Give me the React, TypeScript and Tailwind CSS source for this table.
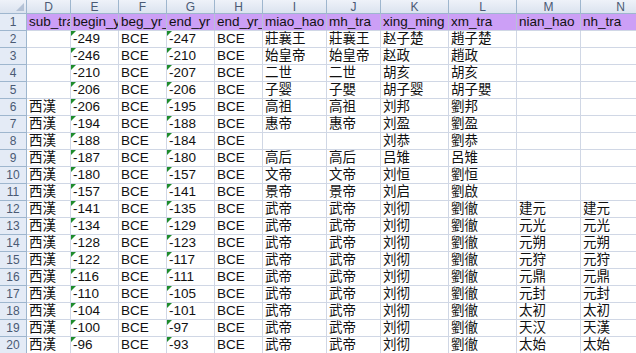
const cols = ['D', 'E', 'F', 'G', 'H', 'I', 'J', 'K', 'L', 'M', 'N'];
const widths = ['w-[44px]', 'w-[48px]', 'w-[48px]', 'w-[48px]', 'w-[48px]', 'w-[64px]', 'w-[54px]', 'w-[68px]', 'w-[68px]', 'w-[64px]', 'w-[80px]'];

const header = ['sub_tra', 'begin_yr', 'beg_yr_era', 'end_yr', 'end_yr_era', 'miao_hao', 'mh_tra', 'xing_ming', 'xm_tra', 'nian_hao', 'nh_tra'];

// D, begin, end, miao_hao, mh_tra, xing_ming, xm_tra, nian_hao, nh_tra
const rows: string[][] = [
  ['', '-249', '-247', '莊襄王', '莊襄王', '赵子楚', '趙子楚', '', ''],
  ['', '-246', '-210', '始皇帝', '始皇帝', '赵政', '趙政', '', ''],
  ['', '-210', '-207', '二世', '二世', '胡亥', '胡亥', '', ''],
  ['', '-206', '-206', '子婴', '子嬰', '胡子婴', '胡子嬰', '', ''],
  ['西漢', '-206', '-195', '高祖', '高祖', '刘邦', '劉邦', '', ''],
  ['西漢', '-194', '-188', '惠帝', '惠帝', '刘盈', '劉盈', '', ''],
  ['西漢', '-188', '-184', '', '', '刘恭', '劉恭', '', ''],
  ['西漢', '-187', '-180', '高后', '高后', '吕雉', '呂雉', '', ''],
  ['西漢', '-180', '-157', '文帝', '文帝', '刘恒', '劉恒', '', ''],
  ['西漢', '-157', '-141', '景帝', '景帝', '刘启', '劉啟', '', ''],
  ['西漢', '-141', '-135', '武帝', '武帝', '刘彻', '劉徹', '建元', '建元'],
  ['西漢', '-134', '-129', '武帝', '武帝', '刘彻', '劉徹', '元光', '元光'],
  ['西漢', '-128', '-123', '武帝', '武帝', '刘彻', '劉徹', '元朔', '元朔'],
  ['西漢', '-122', '-117', '武帝', '武帝', '刘彻', '劉徹', '元狩', '元狩'],
  ['西漢', '-116', '-111', '武帝', '武帝', '刘彻', '劉徹', '元鼎', '元鼎'],
  ['西漢', '-110', '-105', '武帝', '武帝', '刘彻', '劉徹', '元封', '元封'],
  ['西漢', '-104', '-101', '武帝', '武帝', '刘彻', '劉徹', '太初', '太初'],
  ['西漢', '-100', '-97', '武帝', '武帝', '刘彻', '劉徹', '天汉', '天漢'],
  ['西漢', '-96', '-93', '武帝', '武帝', '刘彻', '劉徹', '太始', '太始'],
];

const font = { fontFamily: '"Liberation Sans", "Noto Sans CJK SC", sans-serif' };

function Cell({ w, text, flag, purple }: { w: string; text: string; flag?: boolean; purple?: boolean }) {
  return (
    <div
      className={`${w} shrink-0 h-full relative overflow-hidden whitespace-nowrap border-r border-b border-[#d0d7e5] pl-[2px] leading-[16px] text-[13.5px] text-[#111] ${purple ? 'bg-[#cc9ff6] border-r-[#b8c0d8]' : 'bg-white'}`}
    >
      {flag && (
        <span className="absolute left-0 top-0 w-0 h-0 border-t-[5px] border-r-[5px] border-t-[#1e8c2c] border-r-transparent" />
      )}
      {text}
    </div>
  );
}

export default function App() {
  return (
    <div className="w-[636px] h-[353px] overflow-hidden bg-white" style={font}>
      {/* column letters */}
      <div className="flex h-[14px]">
        <div className="w-[27px] shrink-0 h-full relative bg-gradient-to-b from-[#eef2f9] to-[#dbe3ef] border-r border-b border-[#9eb6ce]">
          <span className="absolute right-[2px] bottom-[2px] w-0 h-0 border-b-[8px] border-l-[8px] border-b-[#b4c2d6] border-l-transparent" />
        </div>
        {cols.map((c, i) => (
          <div
            key={c}
            className={`${widths[i]} shrink-0 h-full flex items-center justify-center bg-gradient-to-b from-[#eef2f9] to-[#dbe3ef] border-r border-b border-[#9eb6ce] text-[12px] leading-[12px] text-[#4a5a74]`}
          >
            {c}
          </div>
        ))}
      </div>
      {/* row 1 */}
      <div className="flex h-[17px]">
        <div className="w-[27px] shrink-0 h-full flex items-center justify-center bg-[#e4ebf6] border-r border-b border-[#9eb6ce] text-[12px] text-[#4a5a74]">
          1
        </div>
        {header.map((h, i) => (
          <Cell key={i} w={widths[i]} text={h} purple />
        ))}
      </div>
      {rows.map((r, ri) => {
        const vals = [r[0], r[1], 'BCE', r[2], 'BCE', r[3], r[4], r[5], r[6], r[7], r[8]];
        return (
          <div key={ri} className="flex h-[17px]">
            <div className="w-[27px] shrink-0 h-full flex items-center justify-center bg-[#e4ebf6] border-r border-b border-[#9eb6ce] text-[12px] text-[#4a5a74]">
              {ri + 2}
            </div>
            {vals.map((v, i) => (
              <Cell key={i} w={widths[i]} text={v} flag={i === 1 || i === 3} />
            ))}
          </div>
        );
      })}
    </div>
  );
}
